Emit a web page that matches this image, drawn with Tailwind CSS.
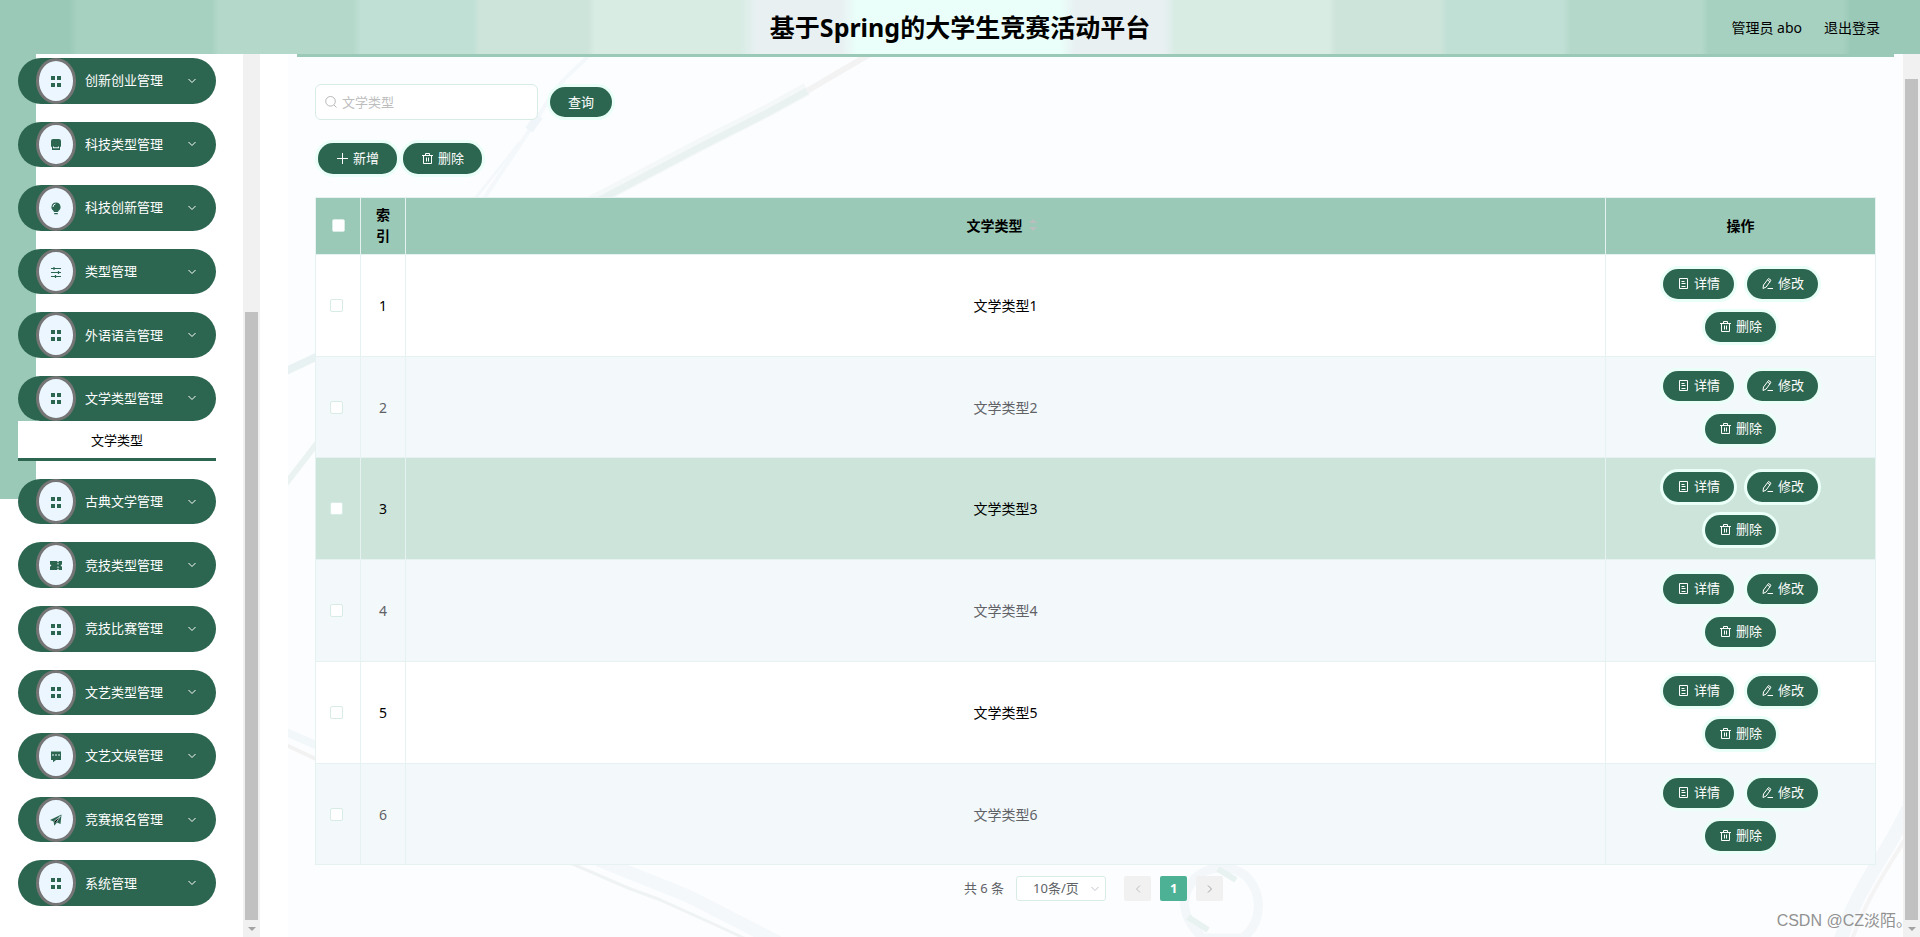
<!DOCTYPE html>
<html lang="zh-CN">
<head>
<meta charset="utf-8">
<meta name="viewport" content="width=device-width, initial-scale=1">
<title>基于Spring的大学生竞赛活动平台</title>
<script src="https://cdn.jsdelivr.net/npm/@tailwindcss/browser@4"></script>
</head>
<body class="flex min-h-screen flex-col bg-white font-['Noto_Sans','Noto_Sans_CJK_SC',sans-serif] text-[13px] leading-[21px] text-black">

<svg class="hidden" aria-hidden="true">
  <symbol id="grid" viewBox="0 0 16 16"><path fill="currentColor" d="M3 3h4v4H3zM9 3h4v4H9zM3 10h4v4H3zM9 10h4v4H9z"/></symbol>
  <symbol id="tray" viewBox="0 0 16 16"><path fill="currentColor" fill-rule="evenodd" d="M5 3h6a2 2 0 0 1 2 2v5a1 1 0 0 1-1 1v3H4v-3a1 1 0 0 1-1-1V5a2 2 0 0 1 2-2zm0 7.500v1.700h6v-1.700h-1v.8H6v-.8z"/></symbol>
  <symbol id="bulb" viewBox="0 0 16 16"><path fill="currentColor" d="M8 2.500a4.500 4.500 0 0 1 2.600 8.200L10 12H6l-.6-1.300A4.500 4.500 0 0 1 8 2.500zM6.200 13h3.600v1.200H6.200z"/><path d="M5 7a3 3 0 0 1 2.500-3" fill="none" stroke="#ebf6ff"/></symbol>
  <symbol id="sliders" viewBox="0 0 16 16"><path fill="none" stroke="currentColor" stroke-width="1.200" d="M3 4.500h10M3 8.500h10M3 12.500h10M6 3v3M10.500 7v3M7.500 11v3"/></symbol>
  <symbol id="ticket" viewBox="0 0 16 16"><path fill="currentColor" d="M2 4h7l1 1.500L11 4h3v3.200L12.500 8.500 14 9.800V13h-3l-1-1.500L9 13H2V9.800L3.500 8.500 2 7.200z"/><path stroke="#ebf6ff" d="M10 6v1.500M10 9.500V11"/></symbol>
  <symbol id="chat" viewBox="0 0 16 16"><path fill="currentColor" d="M3 3.500h10V12H8l-3 2.200V12H3z"/><path fill="none" stroke="#ebf6ff" stroke-dasharray="2 1" d="M4 7h8"/></symbol>
  <symbol id="plane" viewBox="0 0 16 16"><path fill="currentColor" d="M13.500 2.500 12.500 12 9 10.600 6.300 13.800 5.600 9.600 2 8z"/><path stroke="#ebf6ff" stroke-width=".7" d="M6 9.500 12.500 4 8.300 10.300"/></symbol>
  <symbol id="down" viewBox="0 0 12 12"><path fill="none" stroke="currentColor" d="M2.500 4 6 7.500 9.500 4"/></symbol>
  <symbol id="search" viewBox="0 0 14 14"><path fill="none" stroke="currentColor" d="M6.500 1.500a4.800 4.800 0 1 1 0 9.600 4.800 4.800 0 0 1 0-9.600M10 10l2.500 2.500"/></symbol>
  <symbol id="plus" viewBox="0 0 13 13"><path stroke="currentColor" d="M6.500 1v11M1 6.500h11"/></symbol>
  <symbol id="trash" viewBox="0 0 13 13"><path fill="none" stroke="currentColor" d="M1 3.500h11M2.500 3.500v8h8v-8M4.500 3.500v-2h4v2M5.500 5.500v4M7.500 5.500v4"/></symbol>
  <symbol id="doc" viewBox="0 0 13 13"><path fill="none" stroke="currentColor" d="M2.500 1.500h8v10h-8zM4.500 4.500h3M4.500 6.500h4M4.500 9.500h4"/></symbol>
  <symbol id="pen" viewBox="0 0 13 13"><path fill="none" stroke="currentColor" d="M7.500 1.500 10 3.200 5.200 10 2 11.500 2.500 8zM6.500 3l2.700 1.800M6.500 11.500H12"/></symbol>
</svg>

<header class="relative flex h-[54px] shrink-0 items-center justify-center bg-[linear-gradient(90deg,#9ac9b7_3.6%,#a6d0c0_4%_11%,#b4d9cb_11.4%_18.400%,#c0e0d5_18.800%_24.600%,#cde4da_25%_30.600%,#d8ece4_31%_38.600%,#e8f0f2_39.400%_43.800%,#eafff9_44.600%_55.200%,#e8f0f2_56%_60.600%,#d8ece4_61.200%_69.200%,#cde4da_69.600%_75%,#c0e0d5_75.400%_81.400%,#b4d9cb_81.800%_88.600%,#a6d0c0_89%_96%,#9ac9b7_96.400%)]">
  <h1 class="text-[25px] leading-[30px] font-bold">基于Spring的大学生竞赛活动平台</h1>
  <div class="absolute inset-y-0 right-10 flex items-center gap-[22px] pt-[2px] text-sm">
    <span>管理员 abo</span>
    <a href="#">退出登录</a>
  </div>
</header>

<div class="flex flex-1">
  <aside class="relative flex w-[260px] shrink-0">
    <div class="absolute top-0 left-0 h-[445px] w-9 bg-[#9ac9b7]"></div>
    <nav class="relative flex-1 pt-1 pr-[27px] pb-[31px] pl-[18px]">
      <ul class="flex h-full flex-col gap-[18px] [&_button]:flex [&_button]:min-h-[45px] [&_button]:w-full [&_button]:flex-1 [&_button]:items-stretch [&_button]:rounded-[23px] [&_button]:bg-[#2d6650] [&_button]:pl-[18px] [&_button]:text-left [&_button]:text-white [&_em]:ml-[9px] [&_em]:flex-1 [&_em]:self-center [&_em]:not-italic [&_i]:flex [&_i]:w-10 [&_i]:items-center [&_i]:justify-center [&_i]:rounded-[50%] [&_i]:border-3 [&_i]:border-[#757575] [&_i]:bg-[#ebf6ff] [&_i]:text-[#2d6650] [&_i_svg]:size-4 [&>li]:flex [&>li]:flex-1 [&>li]:flex-col">
        <li><button type="button"><i><svg><use href="#grid"/></svg></i><em>创新创业管理</em><svg class="mr-[18px] size-3 self-center"><use href="#down"/></svg></button></li>
        <li><button type="button"><i><svg><use href="#tray"/></svg></i><em>科技类型管理</em><svg class="mr-[18px] size-3 self-center"><use href="#down"/></svg></button></li>
        <li><button type="button"><i><svg><use href="#bulb"/></svg></i><em>科技创新管理</em><svg class="mr-[18px] size-3 self-center"><use href="#down"/></svg></button></li>
        <li><button type="button"><i><svg><use href="#sliders"/></svg></i><em>类型管理</em><svg class="mr-[18px] size-3 self-center"><use href="#down"/></svg></button></li>
        <li><button type="button"><i><svg><use href="#grid"/></svg></i><em>外语语言管理</em><svg class="mr-[18px] size-3 self-center"><use href="#down"/></svg></button></li>
        <li class="basis-10"><button type="button" aria-expanded="true"><i><svg><use href="#grid"/></svg></i><em>文学类型管理</em><svg class="mr-[18px] size-3 self-center"><use href="#down"/></svg></button>
          <a href="#" class="flex h-10 shrink-0 items-center justify-center border-b-3 border-[#2d6650] bg-white pt-[2px]">文学类型</a></li>
        <li><button type="button"><i><svg><use href="#grid"/></svg></i><em>古典文学管理</em><svg class="mr-[18px] size-3 self-center"><use href="#down"/></svg></button></li>
        <li><button type="button"><i><svg><use href="#ticket"/></svg></i><em>竞技类型管理</em><svg class="mr-[18px] size-3 self-center"><use href="#down"/></svg></button></li>
        <li><button type="button"><i><svg><use href="#grid"/></svg></i><em>竞技比赛管理</em><svg class="mr-[18px] size-3 self-center"><use href="#down"/></svg></button></li>
        <li><button type="button"><i><svg><use href="#grid"/></svg></i><em>文艺类型管理</em><svg class="mr-[18px] size-3 self-center"><use href="#down"/></svg></button></li>
        <li><button type="button"><i><svg><use href="#chat"/></svg></i><em>文艺文娱管理</em><svg class="mr-[18px] size-3 self-center"><use href="#down"/></svg></button></li>
        <li><button type="button"><i><svg><use href="#plane"/></svg></i><em>竞赛报名管理</em><svg class="mr-[18px] size-3 self-center"><use href="#down"/></svg></button></li>
        <li><button type="button"><i><svg><use href="#grid"/></svg></i><em>系统管理</em><svg class="mr-[18px] size-3 self-center"><use href="#down"/></svg></button></li>
      </ul>
    </nav>
    <div class="flex w-[17px] flex-col items-center bg-[#f1f1f1] pt-[258px]" aria-hidden="true">
      <div class="w-[13px] flex-1 bg-[#c1c1c1]"></div>
      <div class="flex h-[17px] items-center"><svg class="h-1 w-2 text-[#a3a3a3]" viewBox="0 0 8 4"><path fill="currentColor" d="M0 0h8L4 4z"/></svg></div>
    </div>
  </aside>

  <main class="relative ml-7 min-w-0 flex-1 bg-[#fcfdff] px-[9px]">
    <!-- brush-stroke backdrop -->
    <svg class="absolute inset-0 h-full w-full" viewBox="0 0 1615 883" preserveAspectRatio="none" fill="none" aria-hidden="true">
      <path stroke="#f5f8f9" stroke-width="13" d="M300 150 412 91 479 57 519 35"/>
      <path stroke="#e9f1f1" stroke-width="7" d="M300 152 412 93 479 59 519 37"/>
      <path stroke="#f3f3f4" stroke-width="6" d="M519 37 582 0"/>
      <path stroke="#f4f8fb" stroke-width="4" d="M195 146C220 108 240 80 258 50S290 15 302 0"/>
      <path stroke="#f5f8fb" stroke-width="3" d="M186 146 232 88"/>
      <path stroke="#f0f5f9" stroke-width="9" d="M241 76 251 62"/>
      <path stroke="#e9f2f2" stroke-width="8" d="M-4 318 30 302"/>
      <path stroke="#eaf2f2" stroke-width="6" d="M-4 432 30 388"/>
      <path stroke="#f2f7fa" stroke-width="8" d="M-4 677 30 692"/>
      <path stroke="#f2f2f3" stroke-width="4" d="M-4 690 30 706"/>
      <path stroke="#f4f8fb" stroke-width="13" d="M310 806 400 842 490 888"/>
      <path stroke="#f0f3f3" stroke-width="3" d="M280 808 340 834 370 845 430 872 460 886"/>
      <path stroke="#f3f7fa" stroke-width="9" d="M900 835C910 812 940 808 958 822 975 840 975 868 955 884H915C898 868 892 850 900 835"/>
      <path stroke="#e8f2f1" stroke-width="6" d="M930 815 948 826M900 863 920 876"/>
      <path stroke="#f3f7fa" stroke-width="14" d="M1620 755C1600 800 1570 830 1552 888"/>
      <path stroke="#f5f4f5" stroke-width="4" d="M1620 780C1600 815 1580 840 1563 888"/>
    </svg>

    <div class="relative border-t-3 border-[#9ac9b7] px-[18px] pt-[27px] pb-6">
      <form class="flex items-center gap-3">
        <label class="flex h-9 w-[223px] items-center gap-1 rounded-md border border-[#d8ece6] bg-white pl-2">
          <svg class="size-[14px] text-[#b8b8b8]"><use href="#search"/></svg>
          <input type="text" aria-label="文学类型" placeholder="文学类型" class="w-40 placeholder:text-[#bdbdbd] focus:outline-none">
        </label>
        <button type="button" class="h-[30px] rounded-[15px] bg-[#2d6650] px-[18px] text-white shadow-[0_0_0_3px_#eafff8]">查询</button>
      </form>

      <div class="mt-[23px] mb-[23px] ml-[3px] flex gap-[6px] [&_button]:flex [&_button]:h-[31px] [&_button]:items-center [&_button]:justify-center [&_button]:gap-1 [&_button]:rounded-[15px] [&_button]:bg-[#2d6650] [&_button]:px-[18px] [&_button]:text-white [&_button]:shadow-[0_0_0_3px_#eafff8] [&_svg]:size-[13px]">
        <button type="button"><svg><use href="#plus"/></svg>新增</button>
        <button type="button"><svg><use href="#trash"/></svg>删除</button>
      </div>

      <table class="w-full table-fixed border-collapse text-center text-sm leading-[21px] [&_button]:flex [&_button]:h-[30px] [&_button]:items-center [&_button]:gap-1 [&_button]:rounded-[15px] [&_button]:bg-[#2d6650] [&_button]:px-[14px] [&_button]:pb-px [&_button]:text-[13px] [&_button]:text-white [&_button]:shadow-[0_0_0_3px_#eafff8] [&_button_svg]:size-[13px] [&_input]:block [&_input]:mx-auto [&_input]:size-[13px] [&_input]:appearance-none [&_input]:rounded-[2px] [&_input]:border [&_input]:border-[#d8ece6] [&_input]:bg-white [&_td]:border [&_td]:border-[#e6f1f1] [&_td:first-child]:pr-1 [&_th]:border [&_th]:border-[#e6f1f1] [&_th]:pb-[2px] [&_td>div]:mx-auto [&_td>div]:flex [&_td>div]:w-[180px] [&_td>div]:flex-wrap [&_td>div]:justify-center [&_td>div]:gap-[13px]">
        <colgroup><col class="w-[45px]"><col class="w-[45px]"><col><col class="w-[270px]"></colgroup>
        <thead class="bg-[#9ac9b7]">
          <tr class="h-[57px]">
            <th><input type="checkbox" aria-label="全选"></th>
            <th class="px-[10px]">索引</th>
            <th><span class="inline-flex items-center gap-[6px] pr-2">文学类型<svg class="h-3 w-2" viewBox="0 0 8 12" aria-hidden="true"><path fill="#b9bfbe" d="M0 4h8L4 0zM0 8h8l-4 4z"/></svg></span></th>
            <th>操作</th>
          </tr>
        </thead>
        <tbody>
          <tr class="h-[102px] bg-white">
            <td><input type="checkbox" aria-label="选择 1"></td><td>1</td><td>文学类型1</td>
            <td><div><button type="button"><svg><use href="#doc"/></svg>详情</button><button type="button"><svg><use href="#pen"/></svg>修改</button><button type="button"><svg><use href="#trash"/></svg>删除</button></div></td>
          </tr>
          <tr class="h-[101px] bg-[#f3f8fb] text-[#606266]">
            <td><input type="checkbox" aria-label="选择 2"></td><td>2</td><td>文学类型2</td>
            <td><div><button type="button"><svg><use href="#doc"/></svg>详情</button><button type="button"><svg><use href="#pen"/></svg>修改</button><button type="button"><svg><use href="#trash"/></svg>删除</button></div></td>
          </tr>
          <tr class="h-[102px] bg-[#cde4da]">
            <td><input type="checkbox" aria-label="选择 3"></td><td>3</td><td>文学类型3</td>
            <td><div><button type="button"><svg><use href="#doc"/></svg>详情</button><button type="button"><svg><use href="#pen"/></svg>修改</button><button type="button"><svg><use href="#trash"/></svg>删除</button></div></td>
          </tr>
          <tr class="h-[102px] bg-[#f3f8fb] text-[#606266]">
            <td><input type="checkbox" aria-label="选择 4"></td><td>4</td><td>文学类型4</td>
            <td><div><button type="button"><svg><use href="#doc"/></svg>详情</button><button type="button"><svg><use href="#pen"/></svg>修改</button><button type="button"><svg><use href="#trash"/></svg>删除</button></div></td>
          </tr>
          <tr class="h-[102px] bg-white">
            <td><input type="checkbox" aria-label="选择 5"></td><td>5</td><td>文学类型5</td>
            <td><div><button type="button"><svg><use href="#doc"/></svg>详情</button><button type="button"><svg><use href="#pen"/></svg>修改</button><button type="button"><svg><use href="#trash"/></svg>删除</button></div></td>
          </tr>
          <tr class="h-[101px] bg-[#f3f8fb] text-[#606266]">
            <td><input type="checkbox" aria-label="选择 6"></td><td>6</td><td>文学类型6</td>
            <td><div><button type="button"><svg><use href="#doc"/></svg>详情</button><button type="button"><svg><use href="#pen"/></svg>修改</button><button type="button"><svg><use href="#trash"/></svg>删除</button></div></td>
          </tr>
        </tbody>
      </table>

      <div class="mt-[11px] flex h-[25px] items-center justify-center pr-1 text-[#606266]">
        <span>共 6 条</span>
        <label class="relative ml-3 flex h-full w-[90px]">
          <select aria-label="每页条数" class="w-full appearance-none rounded-[3px] border border-[#d8ece6] bg-white pl-4"><option>10条/页</option></select>
          <svg class="absolute top-[7px] right-[5px] size-3 text-[#c0c4cc]"><use href="#down"/></svg>
        </label>
        <button type="button" aria-label="上一页" class="ml-[18px] flex h-full w-[27px] items-center justify-center rounded-[2px] bg-[#f1f1f1] text-[#c0c0c4]"><svg class="size-3 rotate-90"><use href="#down"/></svg></button>
        <button type="button" class="ml-[9px] h-full w-[27px] rounded-[2px] bg-[#4db295] font-bold text-white">1</button>
        <button type="button" aria-label="下一页" class="ml-[9px] flex h-full w-[27px] items-center justify-center rounded-[2px] bg-[#f1f1f1] text-[#a0a0a4]"><svg class="size-3 -rotate-90"><use href="#down"/></svg></button>
      </div>
    </div>
  </main>

  <div class="flex w-[17px] shrink-0 flex-col items-center bg-[#f1f1f1] pt-[25px]" aria-hidden="true">
    <div class="w-[13px] flex-1 bg-[#c1c1c1]"></div>
    <div class="flex h-[17px] items-center"><svg class="h-1 w-2 text-[#a3a3a3]" viewBox="0 0 8 4"><path fill="currentColor" d="M0 0h8L4 4z"/></svg></div>
  </div>
</div>

<div class="absolute right-2 bottom-1 font-['Liberation_Sans','Noto_Sans_CJK_SC',sans-serif] text-base leading-6 text-[#929292]">CSDN @CZ淡陌。</div>
</body>
</html>
